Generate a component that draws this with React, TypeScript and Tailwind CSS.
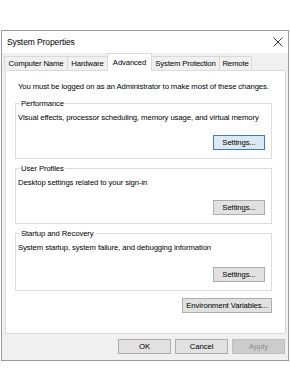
import React from "react";

const font = { fontFamily: '"Liberation Sans", Arial, sans-serif' };

function Btn({ label, className = "" }: { label: string; className?: string }) {
  return (
    <div
      className={`flex h-[15px] items-center justify-center border border-[#adadad] bg-[#e1e1e1] text-[7.75px] tracking-[-0.1px] text-black ${className}`}
    >
      {label}
    </div>
  );
}

function Group({ title, text, h, focused }: { title: string; text: string; h: string; focused?: boolean }) {
  return (
    <div className={`relative ml-[9px] mr-[13px] border border-[#dcdcdc] ${h} flex flex-col`}>
      <div className="absolute left-[4px] top-[-6px] bg-white px-[1px] text-[7.75px] leading-[11px] tracking-[-0.12px] text-black">
        {title}
      </div>
      <div className="ml-[2px] mt-[8px] whitespace-nowrap text-[7.75px] leading-[11px] tracking-[-0.12px] text-black">{text}</div>
      <div className="mt-auto mb-[8px] mr-[6px] flex justify-end">
        <div
          className={`flex h-[15px] w-[52px] items-center justify-center border text-[7.75px] tracking-[-0.1px] text-black ${
            focused ? "border-[#3c7fb1] bg-[#dce9f5]" : "border-[#adadad] bg-[#e1e1e1]"
          }`}
        >
          Settings...
        </div>
      </div>
    </div>
  );
}

export default function App() {
  const tabs = [
    { label: "Computer Name", w: "w-[64px]" },
    { label: "Hardware", w: "w-[41px]" },
    { label: "Advanced", w: "w-[45px]", sel: true },
    { label: "System Protection", w: "w-[69px]" },
    { label: "Remote", w: "w-[33px]" },
  ];
  return (
    <div className="h-[386px] w-[290px] overflow-hidden bg-white pt-[30px]" style={font}>
      <div className="ml-[1px] flex h-[331px] w-[288px] flex-col border border-[#9a9a9a] bg-[#f0f0f0]">
        {/* title bar */}
        <div className="flex h-[22px] shrink-0 items-center justify-between bg-white pl-[5px] pr-[3px]">
          <span className="text-[8.5px] tracking-[-0.1px] text-black">System Properties</span>
          <svg width="10" height="10" viewBox="0 0 10 10" className="mr-[2px]">
            <path d="M0.5 0.5 L9.5 9.5 M9.5 0.5 L0.5 9.5" stroke="#222" strokeWidth="0.9" />
          </svg>
        </div>
        {/* tabs */}
        <div className="flex h-[17px] items-end pl-[2px]">
          {tabs.map((t) =>
            t.sel ? (
              <div
                key={t.label}
                className={`${t.w} relative z-10 -mb-[1px] -mr-[1px] flex h-[18px] items-start justify-center whitespace-nowrap border border-b-0 border-[#d9d9d9] bg-white pt-[3px] text-[7.75px] tracking-[-0.15px] text-black`}
              >
                {t.label}
              </div>
            ) : (
              <div
                key={t.label}
                className={`${t.w} -mr-[1px] flex h-[14px] items-center justify-center whitespace-nowrap border border-b-0 border-[#d9d9d9] bg-[#f0f0f0] text-[7.75px] tracking-[-0.15px] text-black`}
              >
                {t.label}
              </div>
            )
          )}
        </div>
        {/* panel */}
        <div className="ml-[3px] flex h-[264px] w-[281px] flex-col border border-[#d9d9d9] bg-white pt-[10px]">
          <div className="ml-[12px] whitespace-nowrap text-[7.75px] leading-[11px] tracking-[-0.12px] text-black">
            You must be logged on as an Administrator to make most of these changes.
          </div>
          <div className="mt-[11px]">
            <Group title="Performance" text="Visual effects, processor scheduling, memory usage, and virtual memory" h="h-[56px]" focused />
          </div>
          <div className="mt-[9px]">
            <Group title="User Profiles" text="Desktop settings related to your sign-in" h="h-[56px]" />
          </div>
          <div className="mt-[9px]">
            <Group title="Startup and Recovery" text="System startup, system failure, and debugging information" h="h-[58px]" />
          </div>
          <div className="mr-[13px] mt-[7px] flex justify-end">
            <Btn label="Environment Variables..." className="w-[90px]" />
          </div>
        </div>
        {/* bottom buttons */}
        <div className="mr-[3px] mt-[5px] flex justify-end gap-[4px]">
          <Btn label="OK" className="w-[53px]" />
          <Btn label="Cancel" className="w-[53px]" />
          <div className="flex h-[15px] w-[53px] items-center justify-center border border-[#bfbfbf] bg-[#cccccc] text-[7.75px] text-[#8c8c8c]">
            Apply
          </div>
        </div>
      </div>
    </div>
  );
}
